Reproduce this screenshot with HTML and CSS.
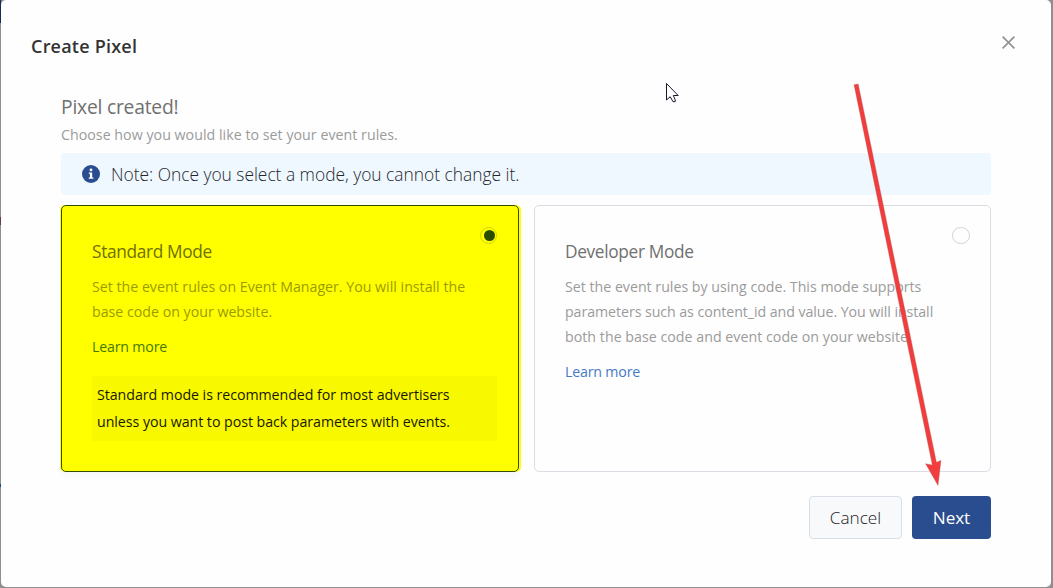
FILE: index.html
```html
<!DOCTYPE html>
<html lang="en">
<head>
<meta charset="utf-8">
<title>Create Pixel</title>
<link rel="stylesheet" href="styles.css">
</head>
<body>
<main class="dialog">
  <header class="dialog-header">
    <h1 class="dialog-title">Create Pixel</h1>
    <button class="close" aria-label="Close"><svg width="14" height="14" viewBox="0 0 14 14"><path d="M.6 .6L12.4 12.4M12.4 .6L.6 12.4" stroke="#929292" stroke-width="1.7" fill="none"/></svg></button>
  </header>
  <section class="content">
    <h2 class="status">Pixel created!</h2>
    <p class="intro"><span>Choose how you would like to set your event rules.</span></p>
    <div class="note">
      <svg width="18" height="18" viewBox="0 0 18 18"><circle cx="9" cy="9" r="9" fill="#2a4d8f"/><circle cx="9" cy="4.9" r="1.4" fill="#fff"/><path d="M6.8 7.4H10.2V12.4H11.4V13.8H6.7V12.4H7.9V8.7H6.8Z" fill="#fff"/></svg>
      <span class="note-text">Note: Once you select a mode, you cannot change it.</span>
    </div>
    <div class="modes">
      <article class="card selected">
        <span class="radio"></span>
        <h3 class="mode-title">Standard Mode</h3>
        <p class="description"><span>Set the event rules on Event Manager. You will install the</span><br><span>base code on your website.</span></p>
        <a class="learn">Learn more</a>
        <p class="tip"><span>Standard mode is recommended for most advertisers</span><br><span>unless you want to post back parameters with events.</span></p>
      </article>
      <article class="card">
        <span class="radio"></span>
        <h3 class="mode-title">Developer Mode</h3>
        <p class="description"><span>Set the event rules by using code. This mode supports</span><br><span class="tight">parameters such as content_id and value. You will install</span><br><span class="loose">both the base code and event code on your website.</span></p>
        <a class="learn">Learn more</a>
      </article>
    </div>
    <footer class="actions">
      <button class="button cancel">Cancel</button>
      <button class="button next">Next</button>
    </footer>
  </section>
</main>
<i class="edge edge-top"></i><i class="edge edge-mid"></i><i class="edge edge-low"></i>
<svg class="annotations" width="1053" height="588" viewBox="0 0 1053 588">
  <path d="M854 84.7L858.2 84L936.4 462.2L941 460.4L938 485.5L925.6 463.7L932.3 465Z" fill="#f33c3c" stroke="#a76565" stroke-width=".35"/>
  <path d="M666.5 83.5V100L670.2 96.7L673 101.7H675.2V99.8L673.3 95.5H678.2Z" fill="#fff" stroke="#111a26" stroke-width="1"/>
</svg>
</body>
</html>
```

FILE: styles.css
```css
* { box-sizing: border-box; }
body { margin: 0; width: 1053px; height: 588px; overflow: hidden; background: #8f8f8f; padding: 0 2px 1px 1px; font-family: "Open Sans", "Noto Sans", sans-serif; }
h1, h2, h3, p { margin: 0; font-weight: 400; }
button { font-family: inherit; padding: 0; }
.dialog { height: 587px; background: #fefefe; border-radius: 5px; }
.dialog-header { height: 93px; padding: 0 35px 0 30px; display: flex; justify-content: space-between; }
.dialog-title { padding-top: 34px; font-size: 18px; line-height: 24px; font-weight: 600; color: #333; letter-spacing: .22px; }
.close { width: 14px; height: 14px; margin-top: 36px; border: 0; background: none; display: flex; }
.content { padding: 0 60px; }
.status { font-size: 19.3px; line-height: 28px; color: #707070; letter-spacing: -.22px; }
.intro { height: 32px; font-size: 14.2px; line-height: 27px; color: #9b9b9b; letter-spacing: .035px; }
.note { height: 42px; border-radius: 4px; background: #f0f8ff; display: flex; align-items: center; padding: 0 21px; gap: 11px; color: #23272d; }
.note-text { font-size: 17.4px; font-weight: 300; line-height: 24px; letter-spacing: -.02px; }
.modes { margin-top: 10px; height: 267px; display: grid; grid-template-columns: 458px 457px; gap: 15px; }
.card { position: relative; border: 1px solid #d9dee4; border-radius: 5px; padding: 34px 21px 0 30px; }
.selected { background: #ff0; border-color: #304d00; box-shadow: -1px 0 #ff0, 2px 0 #ff0, 0 6px 5px #f8f8f8; }
.radio { position: absolute; top: 21px; right: 20px; width: 18px; height: 17px; border: 1px solid #ccd3dc; border-radius: 9px; }
.selected .radio { right: 21px; width: 17px; border-color: #d1d800; padding: 2px 0 0 3px; }
.selected .radio::after { content: ""; display: block; width: 11px; height: 11px; border-radius: 50%; background: #2a4d00; }
.mode-title { font-size: 17.3px; line-height: 24px; color: #707070; letter-spacing: -.34px; }
.selected .mode-title { color: #707000; }
.description { margin-top: 10px; font-size: 14.2px; line-height: 25px; color: #9b9b9b; }
.description .tight { letter-spacing: -.06px; }
.description .loose { letter-spacing: .03px; }
.selected .description { color: #9b9b00; }
.learn { display: block; margin-top: 10px; font-size: 14.2px; line-height: 25px; color: #4679c8; letter-spacing: -.18px; }
.selected .learn { color: #467900; }
.tip { width: 405px; height: 65px; margin-top: 17px; padding: 5px; background: #f8f800; color: #181800; font-size: 14.2px; line-height: 27px; letter-spacing: -.04px; }
.actions { margin-top: 24px; display: flex; justify-content: flex-end; gap: 10px; }
.button { height: 43px; border-radius: 4px; font-size: 17.2px; }
.cancel { width: 93px; border: 1px solid #d9dfe6; background: #f8f9fb; color: #222; font-weight: 300; }
.next { width: 79px; border: 0; background: #2a4d8f; color: #fff; letter-spacing: -.1px; }
.description span, .tip span, .note-text { white-space: nowrap; }
.annotations { position: absolute; left: 0; top: 0; pointer-events: none; }
.edge { position: absolute; left: 0; width: 1px; }
.edge-top { top: 0; height: 23px; background: #172b59; }
.edge-mid { top: 217px; height: 8px; background: #5a4050; }
.edge-low { top: 484px; height: 3px; background: #1c4a80; }
```
